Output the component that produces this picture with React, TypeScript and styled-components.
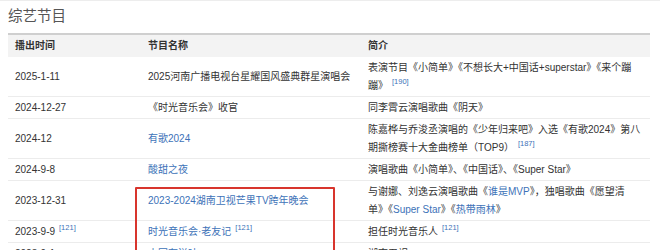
import React from 'react';
import styled, { createGlobalStyle } from 'styled-components';

const GlobalStyle = createGlobalStyle`
  body {
    margin: 0;
    background: #fff;
    font-family: "Liberation Sans", "Noto Sans CJK SC", sans-serif;
    color: #333;
  }
`;

const Page = styled.div`
  position: relative;
  height: 250px;
  overflow: hidden;
  padding: 6px 10px 0 8px;
  box-sizing: border-box;
  border-top: 1px solid #ededed;
`;
const Title = styled.h2`
  margin: 0 0 7px;
  font-size: 14.5px;
  line-height: 19px;
  font-weight: normal;
  color: #555;
`;
const Table = styled.table`
  width: 642px;
  border-collapse: collapse;
  table-layout: fixed;
  font-size: 10px;
  line-height: 18px;
  border-top: 2px solid #cfcfcf;
`;
const Head = styled.th<{ w: number }>`
  width: ${(p) => p.w}px;
  text-align: left;
  font-weight: bold;
  color: #333;
  background: #f3f3f3;
  padding: 2px 7px;
  box-sizing: border-box;
`;
const Row = styled.tr`
  border-bottom: 1px solid #ececec;
`;
const Cell = styled.td`
  padding: 1.5px 7px;
  vertical-align: middle;
  white-space: nowrap;
`;
const Link = styled.span`
  color: #3d72b8;
`;
const Ref = styled.sup`
  font-size: 7.5px;
  line-height: 0;
  color: #3d72b8;
  margin-left: 4px;
`;
const Marker = styled.div`
  position: absolute;
  left: 135px;
  top: 186px;
  width: 196px;
  height: 90px;
  border: 2px solid #d8352d;
  border-radius: 1px;
`;

type Item = { date: React.ReactNode; name: React.ReactNode; desc: React.ReactNode };

const rows: Item[] = [
  {
    date: '2025-1-11',
    name: '2025河南广播电视台星耀国风盛典群星演唱会',
    desc: (
      <>
        表演节目《小简单》《不想长大+中国话+superstar》《来个蹦
        <br />
        蹦》<Ref>[190]</Ref>
      </>
    ),
  },
  { date: '2024-12-27', name: '《时光音乐会》收官', desc: '同李霄云演唱歌曲《阴天》' },
  {
    date: '2024-12',
    name: <Link>有歌2024</Link>,
    desc: (
      <>
        陈嘉桦与乔浚丞演唱的《少年归来吧》入选《有歌2024》第八
        <br />
        期撕榜赛十大金曲榜单（TOP9）<Ref>[187]</Ref>
      </>
    ),
  },
  { date: '2024-9-8', name: <Link>酸甜之夜</Link>, desc: '演唱歌曲《小简单》、《中国话》、《Super Star》' },
  {
    date: '2023-12-31',
    name: <Link>2023-2024湖南卫视芒果TV跨年晚会</Link>,
    desc: (
      <>
        与谢娜、刘逸云演唱歌曲《<Link>谁是MVP</Link>》，独唱歌曲《愿望清
        <br />
        单》《<Link>Super Star</Link>》《<Link>热带雨林</Link>》
      </>
    ),
  },
  {
    date: (
      <>
        2023-9-9<Ref>[121]</Ref>
      </>
    ),
    name: (
      <>
        <Link>时光音乐会·老友记</Link>
        <Ref>[121]</Ref>
      </>
    ),
    desc: (
      <>
        担任时光音乐人<Ref>[121]</Ref>
      </>
    ),
  },
  { date: '2023-9-1', name: <Link>中国有滋味</Link>, desc: '湖南卫视' },
];

const App: React.FC = () => (
  <>
    <GlobalStyle />
    <Page>
      <Title>综艺节目</Title>
      <Table>
        <thead>
          <tr>
            <Head w={133}>播出时间</Head>
            <Head w={220}>节目名称</Head>
            <Head w={289}>简介</Head>
          </tr>
        </thead>
        <tbody>
          {rows.map((r, i) => (
            <Row key={i}>
              <Cell>{r.date}</Cell>
              <Cell>{r.name}</Cell>
              <Cell>{r.desc}</Cell>
            </Row>
          ))}
        </tbody>
      </Table>
      <Marker />
    </Page>
  </>
);

export default App;
